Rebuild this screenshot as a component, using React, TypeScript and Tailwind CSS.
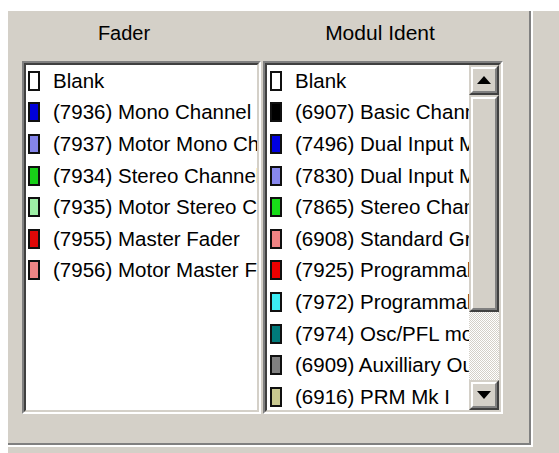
import React from "react";

type Item = { color: string; label: string };

const faders: Item[] = [
  { color: "#ffffff", label: "Blank" },
  { color: "#0000d8", label: "(7936) Mono Channel" },
  { color: "#8484ea", label: "(7937) Motor Mono Channel" },
  { color: "#18d018", label: "(7934) Stereo Channel" },
  { color: "#9ef0a6", label: "(7935) Motor Stereo Channel" },
  { color: "#e00808", label: "(7955) Master Fader" },
  { color: "#f08484", label: "(7956) Motor Master Fader" },
];

const modules: Item[] = [
  { color: "#ffffff", label: "Blank" },
  { color: "#000000", label: "(6907) Basic Channel" },
  { color: "#0000e0", label: "(7496) Dual Input Module" },
  { color: "#8888ee", label: "(7830) Dual Input Module" },
  { color: "#18dc18", label: "(7865) Stereo Channel" },
  { color: "#f08484", label: "(6908) Standard Group" },
  { color: "#f00000", label: "(7925) Programmable Group" },
  { color: "#3cecf4", label: "(7972) Programmable Master" },
  { color: "#007a7a", label: "(7974) Osc/PFL module" },
  { color: "#808080", label: "(6909) Auxilliary Output" },
  { color: "#c8c890", label: "(6916) PRM Mk I" },
];

// sunken 3D frame used by the list boxes
function Sunken({ className, children }: { className?: string; children: React.ReactNode }) {
  return (
    <div className={`border-2 border-t-[#808080] border-l-[#808080] border-r-white border-b-white ${className ?? ""}`}>
      <div className="h-full border-2 border-t-[#404040] border-l-[#404040] border-r-[#d4d0c8] border-b-[#d4d0c8] bg-white flex">
        {children}
      </div>
    </div>
  );
}

function Raised({ className, children }: { className?: string; children?: React.ReactNode }) {
  return (
    <div className={`border-2 border-t-[#d4d0c8] border-l-[#d4d0c8] border-r-[#404040] border-b-[#404040] ${className ?? ""}`}>
      <div className="h-full border-2 border-t-white border-l-white border-r-[#808080] border-b-[#808080] bg-[#d4d0c8] flex items-center justify-center">
        {children}
      </div>
    </div>
  );
}

function Rows({ items, offset }: { items: Item[]; offset: string }) {
  return (
    <div className="flex-1 min-w-0 overflow-hidden">
      {items.map((it) => (
        <div key={it.label} className="h-[31.6px] flex items-center whitespace-nowrap">
          <span className={`w-[12px] h-[20px] shrink-0 border-2 border-[#101010] ${offset}`} style={{ backgroundColor: it.color }} />
          <span className="ml-[13px] text-[20.5px] leading-[24px] text-black">{it.label}</span>
        </div>
      ))}
    </div>
  );
}

export default function App() {
  return (
    <div className="w-[559px] h-[453px] bg-white pt-[11px] pl-[8px] overflow-hidden" style={{ fontFamily: '"Liberation Sans", Arial, sans-serif' }}>
      <div className="h-[442px] bg-[#d4d0c8]">
        {/* etched group frame, only right and bottom edges visible */}
        <div className="w-[525px] h-[436px] border-r-2 border-b-2 border-white">
          <div className="h-full border-r-2 border-b-2 border-[#808080] pl-[14px]">
            <div className="flex h-[50px] pt-[10px] leading-[24px] text-[20px] text-black">
              <div className="w-[204px] text-center">Fader</div>
              <div className="ml-[37px] w-[240px] text-center pr-[6px] text-[21px]">Modul Ident</div>
            </div>
            <div className="flex gap-[2px]">
              <Sunken className="w-[239px] h-[353px]">
                <Rows items={faders} offset="ml-[2px]" />
              </Sunken>
              <Sunken className="w-[240px] h-[353px]">
                <Rows items={modules} offset="ml-[3px]" />
                <div className="w-[30px] shrink-0 flex flex-col">
                  <Raised className="h-[30px]">
                    <svg width="14" height="8" viewBox="0 0 14 8"><path d="M7 0 L14 8 L0 8 Z" fill="#000" /></svg>
                  </Raised>
                  <Raised className="h-[217px]" />
                  <div className="flex-1 bg-[repeating-conic-gradient(#d4d0c8_0_25%,#ffffff_0_50%)] bg-[length:2px_2px]" />
                  <Raised className="h-[30px]">
                    <svg width="14" height="8" viewBox="0 0 14 8"><path d="M0 0 L14 0 L7 8 Z" fill="#000" /></svg>
                  </Raised>
                </div>
              </Sunken>
            </div>
          </div>
        </div>
      </div>
    </div>
  );
}
